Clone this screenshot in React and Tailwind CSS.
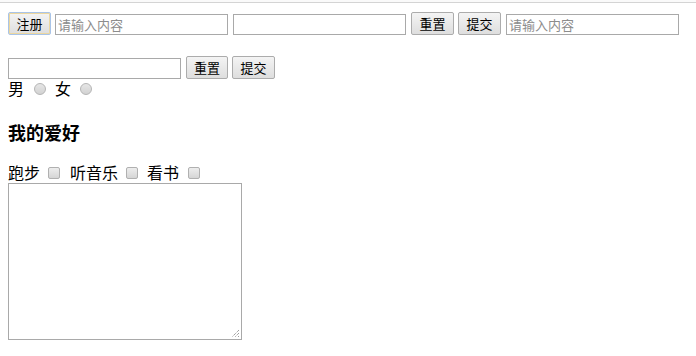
import React from "react";

const font = { fontFamily: '"Microsoft YaHei", "Noto Sans CJK SC", "Liberation Sans", sans-serif' };

function Btn({ children, focus, w = "w-[43px]" }) {
  return (
    <button
      className={`${w} h-[23px] shrink-0 flex items-center justify-center text-[13px] text-black rounded-[2px] border bg-gradient-to-b from-[#f4f4f4] to-[#dedede] ${
        focus ? "border-[#a9c4e8] shadow-[inset_0_0_0_1px_#ecd79f]" : "border-[#acacac]"
      }`}
    >
      {children}
    </button>
  );
}

function Input({ placeholder, w = "w-[173px]" }) {
  return (
    <div
      className={`${w} h-[21px] shrink-0 border border-[#a9a9a9] bg-white flex items-center pl-[2px] text-[13px] text-[#8c8c8c]`}
    >
      {placeholder}
    </div>
  );
}

function Radio() {
  return (
    <span className="block w-[12px] h-[12px] shrink-0 rounded-full border border-[#b5b5b5] bg-gradient-to-b from-[#e6e6e6] to-[#d2d2d2]" />
  );
}

function Check() {
  return (
    <span className="block w-[12px] h-[12px] shrink-0 rounded-[2px] border border-[#b0b0b0] bg-gradient-to-b from-[#ededed] to-[#d5d5d5]" />
  );
}

export default function App() {
  return (
    <div className="w-[696px] h-[356px] bg-white text-black relative overflow-hidden" style={font}>
      <div className="h-[3px] border-b border-[#d4d4d4] bg-[#fafafa]" />
      <div className="px-[8px]">
        <div className="flex items-end mt-[8px] h-[24px]">
          <Btn focus>注册</Btn>
          <div className="ml-[4px]"><Input placeholder="请输入内容" /></div>
          <div className="ml-[5px]"><Input /></div>
          <div className="ml-[5px]"><Btn>重置</Btn></div>
          <div className="ml-[4px]"><Btn>提交</Btn></div>
          <div className="ml-[5px]"><Input placeholder="请输入内容" /></div>
        </div>
        <div className="flex items-end mt-[20px] h-[24px]">
          <Input w="w-[173px]" />
          <div className="ml-[5px]"><Btn w="w-[42px]">重置</Btn></div>
          <div className="ml-[4px]"><Btn>提交</Btn></div>
        </div>
        <div className="flex items-center h-[19px] text-[16px] leading-[19px]">
          <span>男</span>
          <span className="ml-[10px] flex"><Radio /></span>
          <span className="ml-[9px]">女</span>
          <span className="ml-[9px] flex"><Radio /></span>
        </div>
        <div className="mt-[23px] text-[18px] font-bold leading-[22px]">我的爱好</div>
        <div className="mt-[20px] flex items-center h-[19px] text-[16px] leading-[19px]">
          <span>跑步</span>
          <span className="ml-[8px] flex"><Check /></span>
          <span className="ml-[10px]">听音乐</span>
          <span className="ml-[8px] flex"><Check /></span>
          <span className="ml-[9px]">看书</span>
          <span className="ml-[9px] flex"><Check /></span>
        </div>
        <div className="mt-[1px] relative w-[234px] h-[157px] border border-[#a9a9a9] bg-white">
          <svg className="absolute right-[1px] bottom-[1px]" width="10" height="10" viewBox="0 0 10 10">
            <path d="M9 2 L2 9 M9 5 L5 9 M9 8 L8 9" stroke="#777" strokeWidth="1" strokeDasharray="1 1" />
          </svg>
        </div>
      </div>
    </div>
  );
}
